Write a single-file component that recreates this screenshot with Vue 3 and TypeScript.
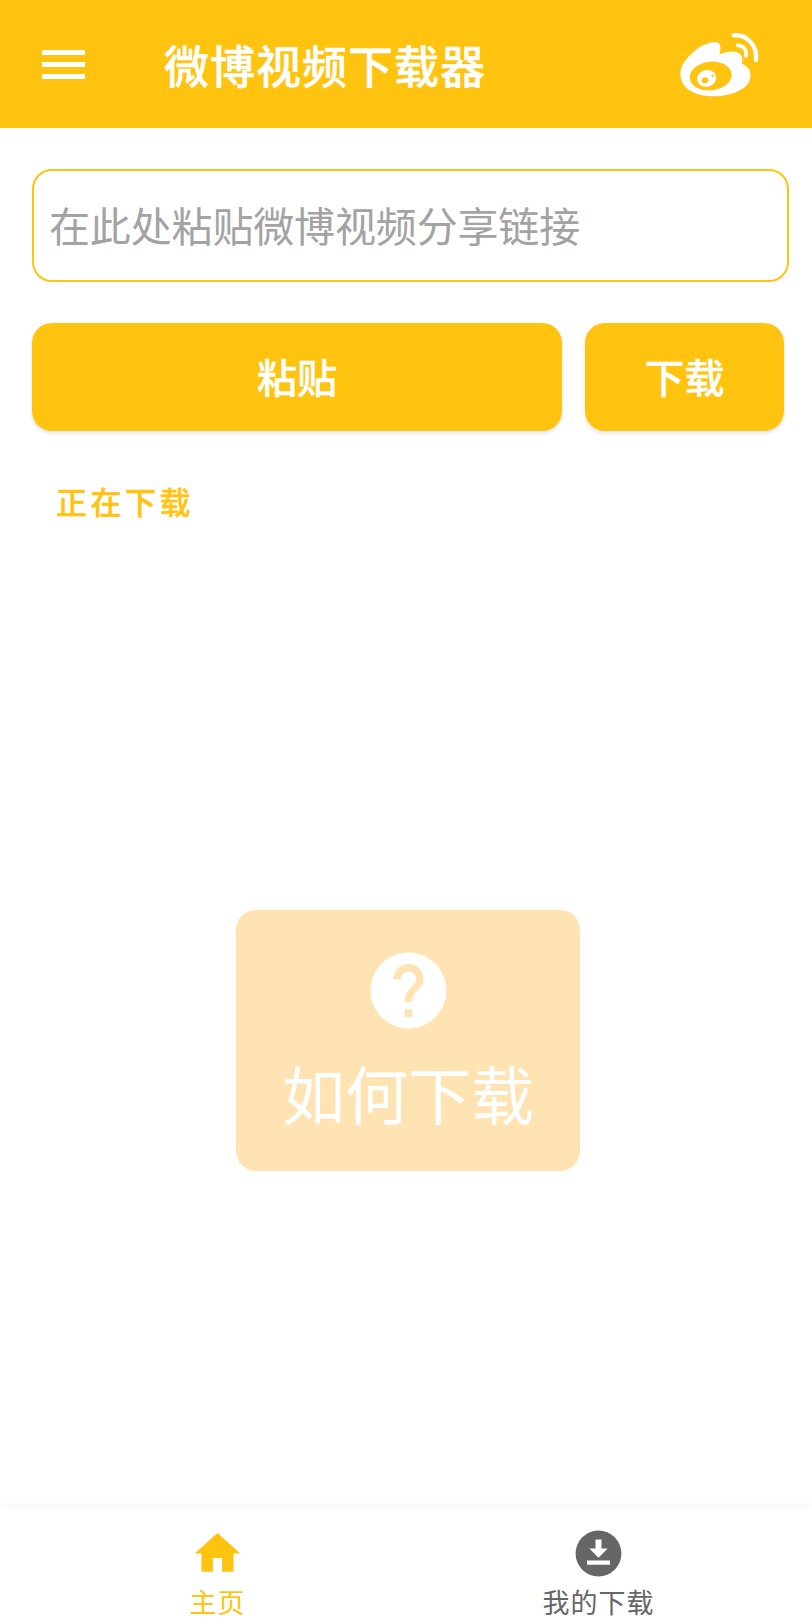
<script setup lang="ts">
import { ref } from 'vue'

const link = ref('')
</script>

<template>
  <div class="page">
    <header class="app-bar">
      <button class="menu" type="button" aria-label="菜单">
        <span></span>
        <span></span>
        <span></span>
      </button>
      <h1 class="title">微博视频下载器</h1>
      <svg class="logo" viewBox="0 0 270 216" aria-hidden="true">
        <path
          fill="#fff"
          d="M16 136C16 102 70 46 118 42C136 40 140 56 133 80C156 68 212 60 201 108C222 114 234 136 222 162C204 194 150 206 108 205C60 204 16 182 16 136Z"
        />
        <ellipse cx="107" cy="144" rx="63" ry="43" fill="#ffc310" transform="rotate(-6 107 144)" />
        <ellipse cx="95" cy="151" rx="29" ry="25" fill="#fff" transform="rotate(-14 95 151)" />
        <ellipse cx="90" cy="157" rx="10" ry="9" fill="#ffc310" transform="rotate(-25 90 157)" />
        <circle cx="113" cy="143" r="3.5" fill="#ffc310" />
        <path fill="none" stroke="#fff" stroke-width="13" stroke-linecap="round" d="M176 22C216 18 248 54 243 96" />
        <path fill="none" stroke="#fff" stroke-width="11" stroke-linecap="round" d="M188 52C204 52 217 66 213 84" />
      </svg>
    </header>

    <main class="content">
      <input v-model="link" class="link-input" type="text" placeholder="在此处粘贴微博视频分享链接" />
      <div class="actions">
        <button class="btn btn--paste" type="button">粘贴</button>
        <button class="btn btn--download" type="button">下载</button>
      </div>
      <p class="status">正在下载</p>
      <div class="help">
        <svg class="help__icon" viewBox="0 0 24 24" aria-hidden="true">
          <path
            fill="#fff"
            d="M12 2C6.48 2 2 6.48 2 12s4.48 10 10 10 10-4.48 10-10S17.52 2 12 2zm1 17h-2v-2h2v2zm2.07-7.75l-.9.92C13.45 12.9 13 13.5 13 15h-2v-.5c0-1.1.45-2.1 1.17-2.83l1.24-1.26c.37-.36.59-.86.59-1.41 0-1.1-.9-2-2-2s-2 .9-2 2H8c0-2.21 1.79-4 4-4s4 1.79 4 4c0 .88-.36 1.68-.93 2.25z"
          />
        </svg>
        <span class="help__text">如何下载</span>
      </div>
    </main>

    <nav class="tabs">
      <div class="tab tab--active">
        <svg class="tab__icon" viewBox="0 0 24 24" aria-hidden="true">
          <path fill="#ffc310" d="M10 20v-6h4v6h5v-8h3L12 3 2 12h3v8z" />
        </svg>
        <span>主页</span>
      </div>
      <div class="tab">
        <svg class="tab__icon" viewBox="0 0 24 24" aria-hidden="true">
          <path
            fill="#666"
            fill-rule="evenodd"
            d="M12 2a10 10 0 1 0 0 20a10 10 0 0 0 0-20zM10.700 5.900h2.600v3.900h2.700L12 13.900 8 9.800h2.700zM7 15.100h10v1.800H7z"
          />
        </svg>
        <span>我的下载</span>
      </div>
    </nav>
  </div>
</template>

<style>
body {
  background: #fff;
}
</style>

<style scoped>
.page {
  display: flex;
  flex-direction: column;
  width: 812px;
  height: 1624px;
  overflow: hidden;
  background: #fff;
  font-family: "Noto Sans CJK SC", "Noto Sans", sans-serif;
}

.app-bar {
  display: flex;
  align-items: center;
  flex: none;
  height: 128px;
  padding: 0 47px 0 42px;
  background: #ffc310;
  color: #fff;
}

.menu {
  display: flex;
  flex-direction: column;
  gap: 7px;
  width: 43px;
  padding: 0;
  border: none;
  background: none;
}

.menu span {
  display: block;
  height: 5px;
  background: #fff;
}

.title {
  flex: 1;
  margin: 0 0 0 79px;
  font-size: 45px;
  line-height: 1;
  font-weight: 500;
  letter-spacing: 1px;
  -webkit-text-stroke: 0.4px #fff;
}

.logo {
  flex: none;
  width: 90px;
  height: 72px;
}

.content {
  display: flex;
  flex: 1;
  flex-direction: column;
  padding: 41px 28px 0 32px;
}

.link-input {
  box-sizing: border-box;
  width: 757px;
  height: 113px;
  padding: 0 15px 4px;
  border: 2px solid #ffc310;
  border-radius: 20px;
  outline: none;
  background: #fff;
  color: #333;
  font-family: inherit;
  font-size: 41px;
  letter-spacing: -0.15px;
}

.link-input::placeholder {
  color: #a3a3a3;
  opacity: 1;
}

.actions {
  display: flex;
  gap: 23px;
  margin-top: 41px;
}

.btn {
  height: 108px;
  padding: 0 0 2px;
  border: none;
  border-radius: 20px;
  background: #ffc310;
  box-shadow: 0 2px 4px rgba(0, 0, 0, 0.12);
  color: #fff;
  font-family: inherit;
  font-size: 40px;
  font-weight: 500;
  -webkit-text-stroke: 0.4px #fff;
}

.btn--paste {
  width: 530px;
}

.btn--download {
  width: 199px;
}

.status {
  margin: 48px 0 0 24px;
  color: #ffc310;
  font-size: 31px;
  line-height: 44px;
  font-weight: 500;
  letter-spacing: 3.5px;
  -webkit-text-stroke: 0.4px #ffc310;
}

.help {
  display: flex;
  flex-direction: column;
  align-items: center;
  align-self: center;
  box-sizing: border-box;
  width: 344px;
  height: 261px;
  margin: 387px 0 0;
  padding-top: 35px;
  border-radius: 20px;
  background: #ffe3b3;
  color: #fff;
}

.help__icon {
  width: 91px;
  height: 91px;
}

.help__text {
  margin-top: 14px;
  font-size: 63px;
  line-height: 84px;
}

.tabs {
  display: flex;
  flex: none;
  height: 116px;
  padding: 0 23px 0 27px;
  background: #fff;
  box-shadow: 0 -2px 6px rgba(0, 0, 0, 0.04);
}

.tab {
  display: flex;
  flex: 1;
  flex-direction: column;
  align-items: center;
  padding-top: 18px;
  color: #666;
  font-size: 27px;
  line-height: 38px;
  letter-spacing: 1px;
}

.tab--active {
  color: #ffc310;
}

.tab__icon {
  width: 55px;
  height: 55px;
  margin-bottom: 2px;
}
</style>
